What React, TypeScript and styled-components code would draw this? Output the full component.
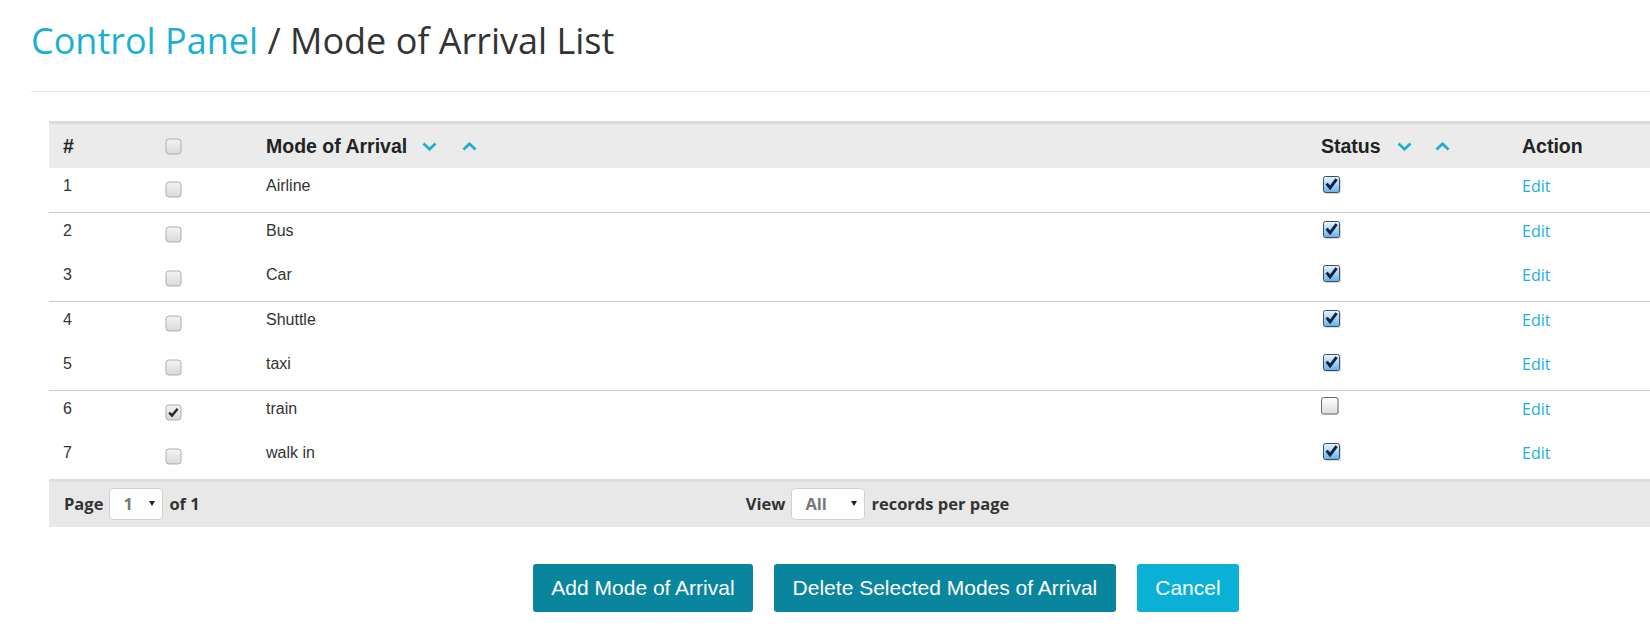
import React from "react";
import styled, { createGlobalStyle } from "styled-components";

const Global = createGlobalStyle`
  html, body { margin: 0; padding: 0; background: #fff; overflow: hidden; }
  body { font-family: "Liberation Sans", Arial, sans-serif; color: #333; }
  * { box-sizing: border-box; }
`;

const Page = styled.div`
  width: 1710px;
  margin-left: 31px;
  padding-top: 21px;
`;

const Title = styled.h1`
  margin: 0;
  font-family: "Open Sans", sans-serif;
  font-weight: 400;
  font-size: 36px;
  line-height: 40px;
  color: #333;
`;

const Crumb = styled.a`
  color: #1aafd5;
  text-decoration: none;
`;

const Rule = styled.hr`
  margin: 30px 0 0;
  border: 0;
  border-top: 1px solid #e6e6e6;
  height: 0;
`;

const TableWrap = styled.div`
  margin: 29px 18px 0;
`;

const COLS = "102px 101px 1055px 201px 215px";

const HeadRow = styled.div`
  display: grid;
  grid-template-columns: ${COLS};
  height: 47px;
  border-top: 3px solid #dcdcdc;
  background: #ebebeb;
  align-items: center;
`;

const HeadCell = styled.div`
  display: flex;
  align-items: center;
  padding-left: 14px;
  font-weight: 700;
  font-size: 19.5px;
  color: #222;
`;

const SortGroup = styled.span<{ $gap: number; $lead: number }>`
  display: inline-flex;
  align-items: center;
  margin-left: ${(p) => p.$lead}px;
  gap: ${(p) => p.$gap}px;
`;

const BodyRow = styled.div<{ $divider: boolean }>`
  display: grid;
  grid-template-columns: ${COLS};
  height: 44px;
  box-sizing: content-box;
  border-top: ${(p) => (p.$divider ? "1px solid #cccccc" : "none")};
`;

const Cell = styled.div`
  padding: 7px 0 0 14px;
  font-size: 16px;
  line-height: 22px;
  color: #333;
`;

const BoxCell = styled.div<{ $top: number }>`
  padding: ${(p) => p.$top}px 0 0 14px;
`;

const EditLink = styled.a`
  font-family: "Open Sans", sans-serif;
  font-size: 16px;
  color: #1ab0d8;
  text-decoration: none;
`;

const Footer = styled.div`
  display: grid;
  grid-template-columns: 1fr 1fr 1fr;
  height: 48px;
  border-top: 3px solid #dddddd;
  background: #e8e8e8;
  align-items: center;
  padding-bottom: 2px;
  font-family: "Open Sans", sans-serif;
  font-weight: 700;
  font-size: 16.5px;
  color: #333;
`;

const FootGroup = styled.div<{ $center?: boolean }>`
  display: flex;
  align-items: center;
  gap: 6px;
  justify-content: ${(p) => (p.$center ? "center" : "flex-start")};
  padding-left: ${(p) => (p.$center ? "0" : "15px")};
  padding-right: ${(p) => (p.$center ? "17px" : "0")};
`;

const FakeSelect = styled.div<{ $w: number }>`
  width: ${(p) => p.$w}px;
  height: 32px;
  background: #fff;
  border: 1px solid #d2d2d2;
  border-radius: 4px;
  display: flex;
  align-items: center;
  justify-content: space-between;
  padding: 0 7px 0 13px;
  color: #777;
  font-weight: 700;
`;

const Caret = styled.span`
  width: 0;
  height: 0;
  border-left: 3px solid transparent;
  border-right: 3px solid transparent;
  border-top: 5px solid #222;
`;

const Buttons = styled.div`
  display: flex;
  justify-content: center;
  gap: 21px;
  margin-top: 37px;
`;

const Btn = styled.button<{ $light?: boolean }>`
  height: 48px;
  padding: 0 18.5px;
  border: 0;
  border-radius: 3px;
  background: ${(p) => (p.$light ? "#0ab0d6" : "#09869e")};
  color: #fff;
  font-family: "Liberation Sans", Arial, sans-serif;
  font-size: 21px;
  cursor: pointer;
`;

const Chevron = ({ up }: { up?: boolean }) => (
  <svg width="15" height="9" viewBox="0 0 15 9">
    <polyline
      points={up ? "1.5,7.5 7.5,1.8 13.5,7.5" : "1.5,1.5 7.5,7.2 13.5,1.5"}
      fill="none"
      stroke="#1aaed4"
      strokeWidth="2.7"
    />
  </svg>
);

const GrayBox = ({ checked }: { checked?: boolean }) => (
  <svg width="17" height="17" viewBox="0 0 17 17" style={{ display: "block" }}>
    <defs>
      <linearGradient id="gb" x1="0" y1="0" x2="0" y2="1">
        <stop offset="0" stopColor="#f4f4f4" />
        <stop offset="1" stopColor="#d9d9d9" />
      </linearGradient>
    </defs>
    <rect x="1" y="1" width="15" height="15" rx="3" fill="url(#gb)" stroke="#adadad" />
    {checked && (
      <path d="M4.2 8.6 L7 11.6 L12.6 4.8" fill="none" stroke="#2a2a2a" strokeWidth="2.4" />
    )}
  </svg>
);

const StatusBox = ({ checked }: { checked: boolean }) =>
  checked ? (
    <svg width="21" height="21" viewBox="0 0 21 21" style={{ display: "block" }}>
      <defs>
        <linearGradient id="sb" x1="0" y1="0" x2="0" y2="1">
          <stop offset="0" stopColor="#e8f6ff" />
          <stop offset="0.5" stopColor="#a6d6fa" />
          <stop offset="1" stopColor="#62b0ee" />
        </linearGradient>
      </defs>
      <rect x="3.5" y="3.5" width="16.5" height="16.5" rx="2" fill="#000" opacity="0.14" />
      <rect x="2.5" y="2.5" width="16" height="16" rx="2" fill="url(#sb)" stroke="#3d4d5e" />
      <path d="M5.6 9.6 L9.1 13.8 L15.6 5.2" fill="none" stroke="#14203c" strokeWidth="2.9" />
    </svg>
  ) : (
    <svg width="21" height="21" viewBox="0 0 21 21" style={{ display: "block" }}>
      <defs>
        <linearGradient id="su" x1="0" y1="0" x2="0" y2="1">
          <stop offset="0" stopColor="#ffffff" />
          <stop offset="1" stopColor="#dcdcdc" />
        </linearGradient>
      </defs>
      <rect x="1" y="1" width="17" height="17" rx="2" fill="#000" opacity="0.1" />
      <rect x="0.5" y="0.5" width="16.5" height="16.5" rx="2" fill="url(#su)" stroke="#6a6a6a" />
    </svg>
  );

const rows = [
  { n: 1, name: "Airline", sel: false, active: true },
  { n: 2, name: "Bus", sel: false, active: true },
  { n: 3, name: "Car", sel: false, active: true },
  { n: 4, name: "Shuttle", sel: false, active: true },
  { n: 5, name: "taxi", sel: false, active: true },
  { n: 6, name: "train", sel: true, active: false },
  { n: 7, name: "walk in", sel: false, active: true },
];

export default function App() {
  return (
    <>
      <Global />
      <Page>
        <Title>
          <Crumb>Control Panel</Crumb> / Mode of Arrival List
        </Title>
        <Rule />
        <TableWrap>
          <HeadRow>
            <HeadCell>#</HeadCell>
            <HeadCell>
              <GrayBox />
            </HeadCell>
            <HeadCell>
              Mode of Arrival
              <SortGroup $lead={15} $gap={25}>
                <Chevron />
                <Chevron up />
              </SortGroup>
            </HeadCell>
            <HeadCell>
              Status
              <SortGroup $lead={16} $gap={23}>
                <Chevron />
                <Chevron up />
              </SortGroup>
            </HeadCell>
            <HeadCell>Action</HeadCell>
          </HeadRow>
          {rows.map((r, i) => (
            <BodyRow key={r.n} $divider={i % 2 === 1}>
              <Cell>{r.n}</Cell>
              <BoxCell $top={13}>
                <GrayBox checked={r.sel} />
              </BoxCell>
              <Cell>{r.name}</Cell>
              <BoxCell $top={6}>
                <StatusBox checked={r.active} />
              </BoxCell>
              <Cell>
                <EditLink>Edit</EditLink>
              </Cell>
            </BodyRow>
          ))}
          <Footer>
            <FootGroup>
              Page
              <FakeSelect $w={54}>
                1<Caret />
              </FakeSelect>
              of 1
            </FootGroup>
            <FootGroup $center>
              View
              <FakeSelect $w={74}>
                All<Caret />
              </FakeSelect>
              records per page
            </FootGroup>
            <div />
          </Footer>
        </TableWrap>
        <Buttons>
          <Btn>Add Mode of Arrival</Btn>
          <Btn>Delete Selected Modes of Arrival</Btn>
          <Btn $light>Cancel</Btn>
        </Buttons>
      </Page>
    </>
  );
}
